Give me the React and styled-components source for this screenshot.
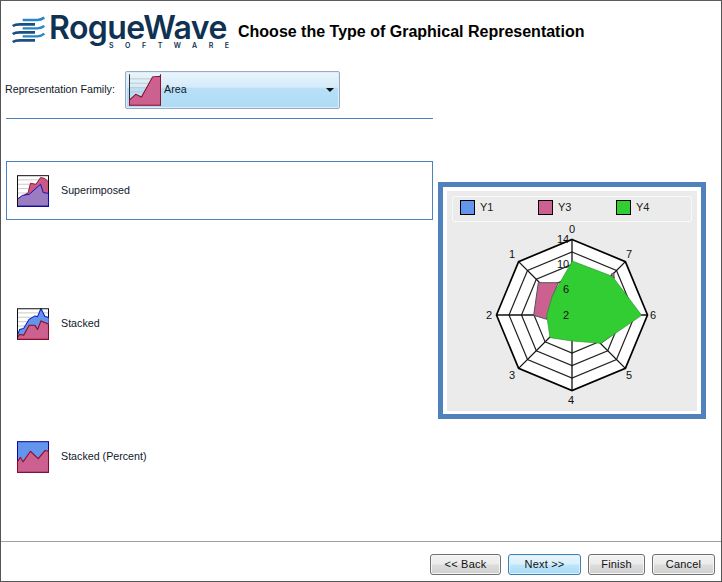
import React from 'react';
import styled, { createGlobalStyle } from 'styled-components';

const Global = createGlobalStyle`
  html, body { margin: 0; padding: 0; background: #fff; }
  * { box-sizing: border-box; }
`;
const Window = styled.div`
  width: 722px; height: 582px; background: #fff;
  border: 1px solid #555; border-top-color: #5c5c5c;
  display: flex; flex-direction: column;
  font-family: "Liberation Sans", Arial, sans-serif; font-size: 10.7px; color: #10182a;
`;
const Header = styled.header`
  height: 69px; flex: none; display: flex; align-items: flex-start; padding: 11px 0 0 9px;
`;
const LogoMark = styled.svg`width: 40px; height: 36px; flex: none; display: block;`;
const LogoText = styled.div`
  width: 186px; margin: 3px 0 0 -1px; flex: none; color: #0f3253;
  font-family: "Inter", "Liberation Sans", sans-serif;
`;
const LogoName = styled.div`font-size: 32px; font-weight: 600; line-height: 26px; letter-spacing: -0.55px; white-space: nowrap;`;
const LogoSub = styled.div`
  font-size: 7px; font-weight: 600; line-height: 5px; letter-spacing: 11.55px; white-space: nowrap;
  margin: 2px 0 0 60px;
`;
const Title = styled.h1`
  margin: 11px 0 0 3px; font: bold 16px/18px "Liberation Sans", Arial, sans-serif; color: #000; white-space: nowrap;
`;
const Body = styled.main`flex: 1; display: flex; min-height: 0;`;
const LeftColumn = styled.section`width: 432px; flex: none; padding-left: 4px;`;
const FamilyRow = styled.div`display: flex; align-items: center; height: 38px; margin-top: 1px;`;
const FamilyLabel = styled.label`width: 120px; flex: none; white-space: nowrap; margin-bottom: 2px;`;
const Combo = styled.div`
  width: 215px; height: 38px; flex: none; display: flex; align-items: center; padding: 0 3px;
  border: 1px solid #9aa9bb; border-radius: 2px;
  box-shadow: inset 0 0 0 1px #dcecf8;
  background: linear-gradient(#e9f5fc 0%, #d5ebf9 42%, #b8e0f8 45%, #aedbf6 100%);
`;
const ComboLabel = styled.span`margin: 0 0 2px 3px; flex: 1;`;
const Arrow = styled.span`
  width: 0; height: 0; margin: 0 2px 0 0;
  border-left: 4px solid transparent; border-right: 4px solid transparent; border-top: 4px solid #111;
`;
const Divider = styled.hr`margin: 9px 0 0 1px; width: 427px; border: 0; border-top: 1px solid #4a84bf; height: 1px;`;
const Choices = styled.div`margin: 42px 0 0 1px; width: 427px; display: flex; flex-direction: column; gap: 74px;`;
const Choice = styled.div`
  height: 59px; display: flex; align-items: center; gap: 12px; padding-left: 10px;
  border: 1px solid ${p => (p.$selected ? '#4a84bf' : 'transparent')};
`;
const ChoiceLabel = styled.span`margin-bottom: 2px;`;
const Thumb = styled.svg`width: 32px; height: 32px; flex: none; display: block;`;
const RightColumn = styled.aside`flex: 1; padding: 112px 0 0 5px;`;
const ChartFrame = styled.div`
  width: 268px; height: 237px; border: 5px solid #4f81bd; background: #fff; padding: 4px;
`;
const ChartBg = styled.div`width: 250px; height: 220px; background: #ebebeb; padding: 5px 5px 0; display: flex; flex-direction: column;`;
const Legend = styled.div`
  height: 26px; flex: none; display: flex; align-items: center; padding: 0 0 4px 7px;
  border: 1px solid #f6f8fa; border-radius: 2px;
  font-size: 11px; color: #222;
`;
const LegendItem = styled.div`width: 78px; flex: none; display: flex; align-items: center; gap: 5px; white-space: nowrap;`;
const Swatch = styled.span`width: 15px; height: 15px; border: 1px solid #000; background: ${p => p.$c}; flex: none;`;
const Radar = styled.svg`display: block; width: 240px; height: 189px; margin-top: -1px; font-family: "Liberation Sans", Arial, sans-serif;`;
const Footer = styled.footer`
  height: 40px; flex: none; border-top: 1px solid #a0a0a0; display: flex; justify-content: flex-end; gap: 7px;
  padding: 12px 6px 0 0;
`;
const Btn = styled.button`
  width: ${p => p.$w}px; height: 21px; padding: 0 0 2px; border-radius: 3px;
  border: 1px solid ${p => (p.$primary ? '#3c7fb1' : '#707070')};
  box-shadow: inset 0 0 0 1px ${p => (p.$primary ? '#dff2fc' : '#f6f6f6')};
  background: ${p => p.$primary
    ? 'linear-gradient(#e8f5fc 0%, #d9f0fc 48%, #bee6fd 52%, #a7d9f5 100%)'
    : 'linear-gradient(#f2f2f2 0%, #ebebeb 48%, #dddddd 52%, #cfcfcf 100%)'};
  font: 11px "Liberation Sans", Arial, sans-serif; color: #111; letter-spacing: .2px;
`;

const Logo = () => (
  <LogoMark viewBox="0 0 120 108" fill="none">
    <path d="M38 24H82C90 24 97 21 103 17" stroke="#2a86c4" strokeWidth="8" />
    <path d="M38 49H82C90 49 97 46 103 42" stroke="#2a86c4" strokeWidth="7" />
    <path d="M38 73H82C90 73 97 70 103 65" stroke="#2a86c4" strokeWidth="7" />
    <path d="M8 42C14 38 20 37 30 37H75" stroke="#1c4f80" strokeWidth="8" />
    <path d="M8 66C14 62 20 61 30 61H75" stroke="#1c4f80" strokeWidth="8" />
    <path d="M8 90C14 86 20 85 30 85H75" stroke="#1c4f80" strokeWidth="8" />
  </LogoMark>
);

const Grid = () => (
  <path d="M0 14H95M0 27H95M0 40H95M0 53H95" stroke="#c4c4c4" strokeWidth="2.6" fill="none" />
);

const AreaIcon = () => (
  <Thumb viewBox="0 0 95 94">
    <Grid />
    <path d="M1 0V92M94 0V92" stroke="#111" strokeWidth="3" fill="none" />
    <path d="M1 90V77L20 60L37 68L70 8L94 6V92H1Z" fill="#cc6090" stroke="#8b0a1e" strokeWidth="3" />
  </Thumb>
);
const SuperIcon = () => (
  <Thumb viewBox="0 0 95 94">
    <Grid />
    <path d="M0 72L33 52L40 24L56 27L70 7L83 10L95 22V94H0Z" fill="#c95a86" stroke="#8b0a1e" strokeWidth="2.6" />
    <path d="M0 72L16 60L36 57L70 27L78 52L95 54V94H0Z" fill="#9a7dc0" stroke="#0a0ac4" strokeWidth="2.8" />
    <rect x="1.5" y="1.5" width="92" height="91" fill="none" stroke="#111" strokeWidth="3" />
    <path d="M1.5 92.5H93.5V54" stroke="#0a0ac4" strokeWidth="3" fill="none" />
  </Thumb>
);
const StackedIcon = () => (
  <Thumb viewBox="0 0 95 94">
    <Grid />
    <path d="M0 83L8 63L20 60L36 33L53 23L61 25L71 1L83 25L95 28V94H0Z" fill="#6495ed" stroke="#1414b4" strokeWidth="3" />
    <path d="M0 88L8 78L20 80L36 51L53 51L61 63L71 38L95 48V94H0Z" fill="#cc6090" stroke="#8b0a1e" strokeWidth="3" />
    <path d="M1.5 92V1.5H93.5V28" stroke="#111" strokeWidth="3" fill="none" />
    <path d="M1.5 92.5H93.5V48" stroke="#8b0a1e" strokeWidth="3" fill="none" />
  </Thumb>
);
const PercentIcon = () => (
  <Thumb viewBox="0 0 95 94">
    <rect x="1.5" y="1.5" width="92" height="91" fill="#6495ed" stroke="#0a0a9c" strokeWidth="3" />
    <path d="M1.5 61L10 48L18 61L40 30L63 52L83 28L93.5 30V92.5H1.5Z" fill="#cc6090" stroke="#8b0a1e" strokeWidth="3" />
  </Thumb>
);

const CX = 120, CY = 94;
const octagon = r => {
  const pts = [];
  for (let i = 0; i < 8; i++) {
    const a = (i * Math.PI) / 4;
    pts.push(`${(CX + r * Math.sin(a)).toFixed(1)},${(CY - r * Math.cos(a)).toFixed(1)}`);
  }
  return pts.join(' ');
};
// converts picture coordinates of the radar close-up into svg coordinates
const pt = (x, y) => `${(x / 3 + 475 - 452).toFixed(1)},${(y / 3).toFixed(1)}`;
const pink = [[190,185],[250,185],[232,228],[215,295],[176,283]];
const pinkTip = [[408,160],[416,155],[418,172]];
const green = [[292,120],[412,166],[500,283],[378,367],[292,360],[225,350],[215,283],[232,225]];
const toPts = l => l.map(([x, y]) => pt(x, y)).join(' ');

const RadarLabel = styled.text`font-size: 11px; fill: #111; text-anchor: middle;`;

const RadarChart = () => (
  <Radar viewBox="0 0 240 189">
    <polygon points={octagon(75.5)} fill="#fff" />
    {[63, 50.5, 38, 25, 12.5].map(r => (
      <polygon key={r} points={octagon(r)} fill="none" stroke="#222" strokeWidth="1.2" />
    ))}
    {[0, 1, 2, 3, 4, 5, 6, 7].map(i => {
      const a = (i * Math.PI) / 4;
      return <line key={i} x1={CX} y1={CY} x2={CX + 75.5 * Math.sin(a)} y2={CY - 75.5 * Math.cos(a)} stroke="#111" strokeWidth="1.3" />;
    })}
    <polygon points={octagon(75.5)} fill="none" stroke="#000" strokeWidth="1.7" />
    <polygon points={toPts(pink)} fill="#cc6090" stroke="#555" strokeWidth="1" />
    <polygon points={toPts(pinkTip)} fill="#cc6090" stroke="#555" strokeWidth="1" />
    <polyline points={toPts([[378,367],[412,342],[425,290]])} fill="none" stroke="#444" strokeWidth="1" />
    <polygon points={toPts(green)} fill="#32cd32" stroke="#2a8a2a" strokeWidth=".6" />
    <RadarLabel x="120" y="12">0</RadarLabel>
    <RadarLabel x="177" y="37">7</RadarLabel>
    <RadarLabel x="201" y="98">6</RadarLabel>
    <RadarLabel x="177" y="158">5</RadarLabel>
    <RadarLabel x="119" y="183">4</RadarLabel>
    <RadarLabel x="60" y="158">3</RadarLabel>
    <RadarLabel x="37" y="98">2</RadarLabel>
    <RadarLabel x="60" y="37">1</RadarLabel>
    <RadarLabel x="111" y="22">14</RadarLabel>
    <RadarLabel x="111" y="47">10</RadarLabel>
    <RadarLabel x="114" y="72">6</RadarLabel>
    <RadarLabel x="114" y="98">2</RadarLabel>
  </Radar>
);

export default function App() {
  return (
    <Window>
      <Global />
      <Header>
        <Logo />
        <LogoText>
          <LogoName>RogueWave</LogoName>
          <LogoSub>SOFTWARE</LogoSub>
        </LogoText>
        <Title>Choose the Type of Graphical Representation</Title>
      </Header>
      <Body>
        <LeftColumn>
          <FamilyRow>
            <FamilyLabel>Representation Family:</FamilyLabel>
            <Combo>
              <AreaIcon />
              <ComboLabel>Area</ComboLabel>
              <Arrow />
            </Combo>
          </FamilyRow>
          <Divider />
          <Choices>
            <Choice $selected><SuperIcon /><ChoiceLabel>Superimposed</ChoiceLabel></Choice>
            <Choice><StackedIcon /><ChoiceLabel>Stacked</ChoiceLabel></Choice>
            <Choice><PercentIcon /><ChoiceLabel>Stacked (Percent)</ChoiceLabel></Choice>
          </Choices>
        </LeftColumn>
        <RightColumn>
          <ChartFrame>
            <ChartBg>
              <Legend>
                <LegendItem><Swatch $c="#6495ed" />Y1</LegendItem>
                <LegendItem><Swatch $c="#cc6090" />Y3</LegendItem>
                <LegendItem><Swatch $c="#32cd32" />Y4</LegendItem>
              </Legend>
              <RadarChart />
            </ChartBg>
          </ChartFrame>
        </RightColumn>
      </Body>
      <Footer>
        <Btn $w={71}>&lt;&lt; Back</Btn>
        <Btn $w={73} $primary>Next &gt;&gt;</Btn>
        <Btn $w={57}>Finish</Btn>
        <Btn $w={63}>Cancel</Btn>
      </Footer>
    </Window>
  );
}
